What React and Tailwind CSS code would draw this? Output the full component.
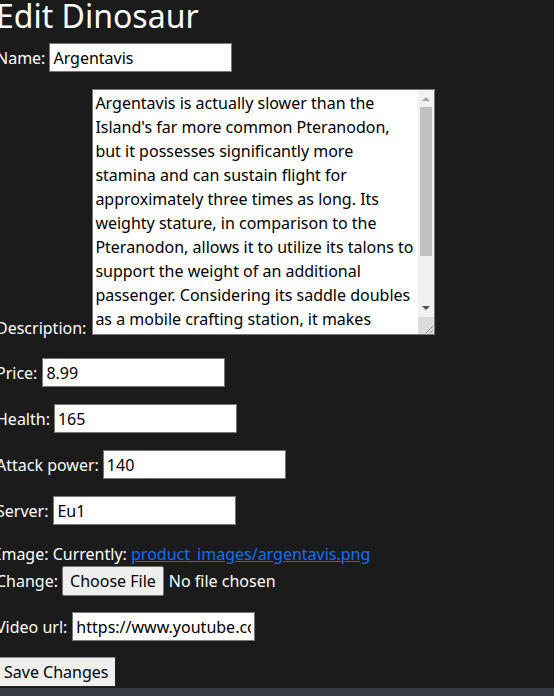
export default function App() {
    const description = "Argentavis is actually slower than the Island's far more common Pteranodon, but it possesses significantly more stamina and can sustain flight for approximately three times as long. Its weighty stature, in comparison to the Pteranodon, allows it to utilize its talons to support the weight of an additional passenger. Considering its saddle doubles as a mobile crafting station, it makes Argentavis an excellent companion for long journeys across the Island.";

    const inputCls = "w-[183px] h-[29px] border border-[#767676] bg-white text-black px-[3px] text-[16px] outline-none";

    return (
        <div className="min-h-screen bg-[#1b1b1b] text-white font-['Noto_Sans',sans-serif] text-[16px] flex flex-col">
            <div className="-ml-[4px] flex flex-col">
                <h1 className="text-[32px] leading-[31px] h-[30px] font-normal">Edit Dinosaur</h1>

                <div className="mt-[13px] flex items-center gap-1">
                    <label>Name:</label>
                    <input className={inputCls} defaultValue="Argentavis" />
                </div>

                <div className="mt-[17px] flex items-end gap-[6px]">
                    <label className="-mb-[5px]">Description:</label>
                    <div className="w-[343px] h-[246px] border border-[#767676] bg-white flex">
                        <textarea
                            className="flex-1 h-full bg-white text-black px-[2px] py-[1px] text-[16px] leading-6 overflow-hidden resize-none outline-none"
                            defaultValue={description}
                        />
                        <div className="w-[16px] h-full bg-[#f1f1f1] flex flex-col">
                            <div className="h-[17px] flex items-center justify-center">
                                <svg width="8" height="4" viewBox="0 0 8 4"><path d="M0 4 L4 0 L8 4 Z" fill="#a3a3a3" /></svg>
                            </div>
                            <div className="h-[149px] mx-[2px] bg-[#c1c1c1]"></div>
                            <div className="flex-1 flex items-end justify-center pb-[7px]">
                                <svg width="8" height="4" viewBox="0 0 8 4"><path d="M0 0 L8 0 L4 4 Z" fill="#505050" /></svg>
                            </div>
                            <div className="h-[17px] bg-[#dcdcdc] flex items-end justify-end">
                                <svg width="10" height="10" viewBox="0 0 10 10">
                                    <path d="M9 2 L2 9 M9 6 L6 9" stroke="#8a8a8a" strokeWidth="1" />
                                </svg>
                            </div>
                        </div>
                    </div>
                </div>

                <div className="mt-[23px] flex items-center gap-[5px]">
                    <label>Price:</label>
                    <input className={inputCls} defaultValue="8.99" />
                </div>

                <div className="mt-[17px] flex items-center gap-1">
                    <label>Health:</label>
                    <input className={inputCls} defaultValue="165" />
                </div>

                <div className="mt-[17px] flex items-center gap-1">
                    <label>Attack power:</label>
                    <input className={inputCls} defaultValue="140" />
                </div>

                <div className="mt-[17px] flex items-center gap-[5px]">
                    <label>Server:</label>
                    <input className={inputCls} defaultValue="Eu1" />
                </div>

                <div className="mt-[17px] leading-6">
                    Image: Currently: <a href="#" className="text-[#0d6efd] underline">product_images/argentavis.png</a>
                </div>
                <div className="flex items-center gap-1">
                    <label>Change:</label>
                    <div className="flex items-center gap-[5px]">
                        <button className="h-[30px] px-[7px] bg-[#efefef] text-black border border-[#767676] rounded-[2px]">Choose File</button>
                        <span>No file chosen</span>
                    </div>
                </div>

                <div className="mt-[16px] flex items-center gap-[5px]">
                    <label>Video url:</label>
                    <input className={inputCls} defaultValue="https://www.youtube.com/watch?v=argentavis" />
                </div>

                <div className="mt-[16px]">
                    <button className="h-[30px] px-[7px] bg-[#efefef] text-black border border-[#222] border-t-[#888] border-l-[#888]">Save Changes</button>
                </div>
            </div>

            <footer className="mt-[1px] h-[60px] bg-[#343a40]"></footer>
        </div>
    );
}
